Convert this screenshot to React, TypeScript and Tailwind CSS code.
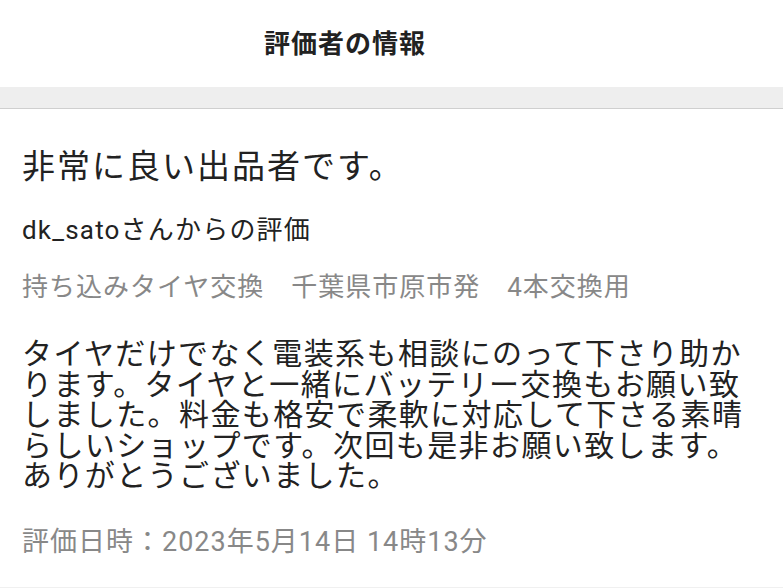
import React from "react";

export default function App() {
  const body = [
    "タイヤだけでなく電装系も相談にのって下さり助か",
    "ります。タイヤと一緒にバッテリー交換もお願い致",
    "しました。料金も格安で柔軟に対応して下さる素晴",
    "らしいショップです。次回も是非お願い致します。",
    "ありがとうございました。",
  ];
  return (
    <div className="w-[783px] h-[588px] bg-white overflow-hidden font-['Roboto','Noto_Sans_CJK_JP',sans-serif]">
      <div className="h-[87px] flex items-center justify-center pr-[93px]">
        <h1 className="text-[26px] font-bold text-[#222] tracking-[1px] leading-none">評価者の情報</h1>
      </div>
      <div className="h-[22px] bg-[#eeeeee] border-b border-[#cfcfcf]" />
      <div className="pl-[22px] border-b border-[#f0f0f0] h-[479px]">
        <div className="pt-[38px] text-[33px] leading-[40px] text-[#222] tracking-[2px]">非常に良い出品者です。</div>
        <div className="mt-[28px] text-[26px] leading-[30px] text-[#222] tracking-[1.2px]">dk_satoさんからの評価</div>
        <div className="mt-[27px] text-[26px] leading-[30px] text-[#888] tracking-[1px]">持ち込みタイヤ交換　千葉県市原市発　4本交換用</div>
        <div className="mt-[37px] text-[30px] leading-[30.5px] text-[#222] tracking-[1.4px]">
          {body.map((l) => (
            <div key={l} className="h-[30.5px] whitespace-nowrap">{l}</div>
          ))}
        </div>
        <div className="mt-[35px] text-[27px] leading-[30px] text-[#888] tracking-[1px]">評価日時：2023年5月14日 14時13分</div>
      </div>
    </div>
  );
}
